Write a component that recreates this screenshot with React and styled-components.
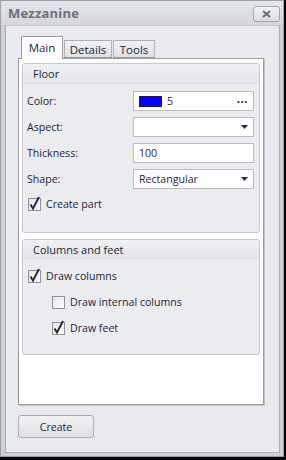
import React from 'react'
import styled, {createGlobalStyle} from 'styled-components'

const GlobalStyle = createGlobalStyle`
    body {
        margin: 0;
        background: #000;
        font-family: "Open Sans", "Noto Sans", sans-serif;
        font-size: 10.6px;
        color: #1e1e3c;
    }
`

const Window = styled.div`
    width: 284px;
    height: 457px;
    box-sizing: border-box;
    background: #cfd0d5;
    border: 1px solid #9d9fa6;
    display: flex;
    flex-direction: column;
`

const TitleBar = styled.div`
    height: 24px;
    display: flex;
    align-items: center;
    justify-content: space-between;
    padding: 0 3px 0 7px;
    background: linear-gradient(#e4e5e9, #d6d7dc);
`

const Title = styled.div`
    font-weight: bold;
    font-size: 13px;
    color: #6c6e7c;
    letter-spacing: 0.2px;
`

const CloseButton = styled.div`
    width: 27px;
    height: 16px;
    box-sizing: border-box;
    border: 1px solid #a3a5ac;
    border-radius: 3px;
    background: linear-gradient(#f1f1f4, #dcdde1);
    display: flex;
    align-items: center;
    justify-content: center;
    margin-top: 1px;
`

const Frame = styled.div`
    flex: 1;
    margin: 0 3px 3px 4px;
    border: 1px solid #a9abb1;
    border-top-color: #c4c5ca;
    background: #e9eaee;
    padding: 11px 0 0 12px;
    display: flex;
    flex-direction: column;
`

const TabStrip = styled.div`
    display: flex;
    align-items: flex-end;
    gap: 1px;
    height: 21px;
    padding-left: 3px;
    position: relative;
    z-index: 1;
    font-size: 11.5px;
`

const Tab = styled.div`
    width: ${p => p.w}px;
    box-sizing: border-box;
    height: ${p => p.active ? 23 : 18}px;
    margin-bottom: ${p => p.active ? -1 : 0}px;
    border: 1px solid ${p => p.active ? '#9a9ca3' : '#aeb0b6'};
    border-bottom: ${p => p.active ? 'none' : '1px solid #9a9ca3'};
    background: ${p => p.active ? '#fff' : 'linear-gradient(#f1f2f4, #dfe0e4)'};
    display: flex;
    align-items: center;
    justify-content: center;
    padding-bottom: ${p => p.active ? 2 : 0}px;
`

const TabPage = styled.div`
    width: 246px;
    height: 347px;
    box-sizing: border-box;
    background: #fff;
    border: 1px solid #9a9ca3;
    box-shadow: 1px 1px 0 #c4c5ca;
    padding: 4px 3px;
    display: flex;
    flex-direction: column;
    gap: 6px;
`

const Group = styled.div`
    height: ${p => p.h}px;
    box-sizing: border-box;
    border: 1px solid #c6c8cd;
    border-radius: 3px;
    background: #ebecef;
    display: flex;
    flex-direction: column;
`

const GroupHeader = styled.div`
    height: ${p => p.h}px;
    display: flex;
    align-items: center;
    padding-left: 10px;
    font-size: 11px;
    background: linear-gradient(#f2f2f5, #e3e4e8);
    border-bottom: 1px solid #dadbe0;
    border-radius: 2px 2px 0 0;
`

const GroupBody = styled.div`
    padding: ${p => p.pt}px 5px 0 4px;
    display: flex;
    flex-direction: column;
    gap: ${p => p.gap}px;
`

const Row = styled.div`
    display: flex;
    align-items: center;
    justify-content: space-between;
    height: 20px;
`

const Field = styled.div`
    width: 121px;
    height: 20px;
    box-sizing: border-box;
    border: 1px solid #b9bbc1;
    background: #fff;
    display: flex;
    align-items: center;
    padding: 0 5px 0 5px;
    gap: 5px;
`

const Swatch = styled.div`
    width: 21px;
    height: 9px;
    background: #0000ff;
    border: 1px solid #1a1a50;
`

const Spacer = styled.div`
    flex: 1;
`

const Dots = styled.span`
    font-weight: bold;
    font-size: 11.5px;
    letter-spacing: 0.5px;
    line-height: 1;
    margin-top: -4px;
`

const Check = styled.label`
    display: flex;
    align-items: center;
    gap: 3px;
    height: 18px;
    padding-left: ${p => p.indent || 0}px;
`

const Button = styled.div`
    width: 76px;
    height: 23px;
    box-sizing: border-box;
    margin-top: 10px;
    border: 1px solid #a9abb2;
    border-radius: 3px;
    background: linear-gradient(#f3f3f6, #dedfe3);
    display: flex;
    align-items: center;
    justify-content: center;
`

const Arrow = () => (
    <svg width="7" height="4" viewBox="0 0 7 4"><path d="M0 0H7L3.5 4Z" fill="#2a2a3a"/></svg>
)

const CheckBox = ({checked}) => (
    <svg width="16" height="16" viewBox="0 0 16 16" style={{overflow: 'visible'}}>
        <defs>
            <linearGradient id="cb" x1="0" y1="0" x2="1" y2="1">
                <stop offset="0" stopColor="#e4e5e8"/>
                <stop offset="1" stopColor="#ffffff"/>
            </linearGradient>
        </defs>
        <rect x="1.5" y="2.5" width="12" height="12" fill="url(#cb)" stroke="#8f9198"/>
        {checked && <path d="M3.5 8.5 L6 12.5 L12 1" fill="none" stroke="#2b2b38" strokeWidth="2"/>}
    </svg>
)

export default function App() {
    return (
        <>
            <GlobalStyle/>
            <Window>
                <TitleBar>
                    <Title>Mezzanine</Title>
                    <CloseButton>
                        <svg width="9" height="8" viewBox="0 0 9 8">
                            <path d="M1 1L8 7M8 1L1 7" stroke="#6c6e78" strokeWidth="2"/>
                        </svg>
                    </CloseButton>
                </TitleBar>
                <Frame>
                    <TabStrip>
                        <Tab active w={42}>Main</Tab>
                        <Tab w={48}>Details</Tab>
                        <Tab w={42}>Tools</Tab>
                    </TabStrip>
                    <TabPage>
                        <Group h={170}>
                            <GroupHeader h={19}>Floor</GroupHeader>
                            <GroupBody pt={7} gap={6}>
                                <Row>
                                    <span>Color:</span>
                                    <Field>
                                        <Swatch/>
                                        <span>5</span>
                                        <Spacer/>
                                        <Dots>...</Dots>
                                    </Field>
                                </Row>
                                <Row>
                                    <span>Aspect:</span>
                                    <Field><Spacer/><Arrow/></Field>
                                </Row>
                                <Row>
                                    <span>Thickness:</span>
                                    <Field>100</Field>
                                </Row>
                                <Row>
                                    <span>Shape:</span>
                                    <Field><span>Rectangular</span><Spacer/><Arrow/></Field>
                                </Row>
                                <Check><CheckBox checked/>Create part</Check>
                            </GroupBody>
                        </Group>
                        <Group h={116}>
                            <GroupHeader h={18}>Columns and feet</GroupHeader>
                            <GroupBody pt={8} gap={8}>
                                <Check><CheckBox checked/>Draw columns</Check>
                                <Check indent={24}><CheckBox/>Draw internal columns</Check>
                                <Check indent={24}><CheckBox checked/>Draw feet</Check>
                            </GroupBody>
                        </Group>
                    </TabPage>
                    <Button>Create</Button>
                </Frame>
            </Window>
        </>
    )
}
